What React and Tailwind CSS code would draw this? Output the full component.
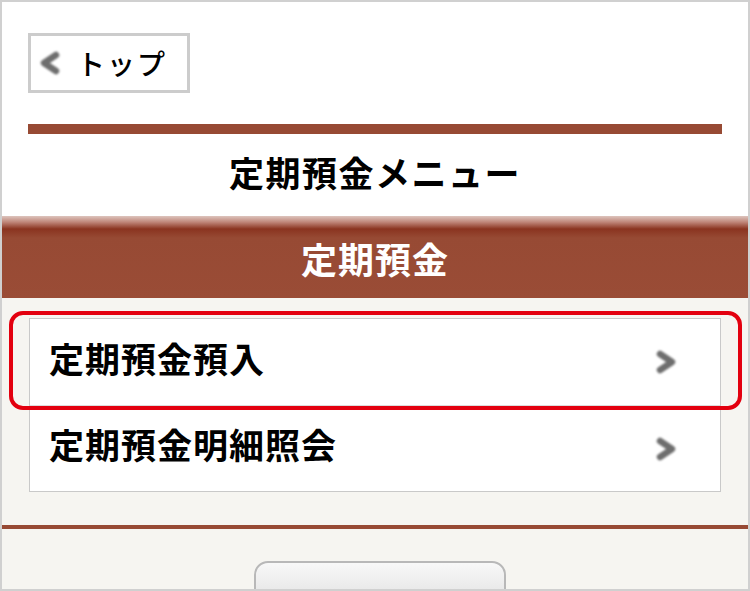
import React from 'react';

function Chevron({ left = false }) {
  return (
    <svg
      width="26"
      height="26"
      viewBox="0 0 26 26"
      className="blur-[0.8px]"
    >
      <polyline
        points={left ? '19,5 7,13 19,21' : '7,5 19,13 7,21'}
        fill="none"
        stroke="#6e6e6e"
        strokeWidth="6.5"
        strokeLinecap="round"
        strokeLinejoin="round"
      />
    </svg>
  );
}

const menuItems = ['定期預金預入', '定期預金明細照会'];

export default function App() {
  return (
    <div
      className="relative w-[750px] h-[591px] overflow-hidden border-2 border-[#d0d0d0] bg-white"
      style={{ fontFamily: '"Noto Sans CJK JP", "Noto Sans", sans-serif' }}
    >
      {/* Top area */}
      <div className="pl-[26px] pr-[26px] pt-[31px]">
        <button className="flex items-center w-[162px] h-[60px] border-[3px] border-[#cccccc] bg-white pl-[6px]">
          <Chevron left />
          <span className="ml-[14px] text-[28px] text-black font-medium tracking-[2px]">
            トップ
          </span>
        </button>
        <div className="mt-[31px] h-[10px] bg-[#974a34]" />
      </div>

      <h1 className="h-[82px] flex items-center justify-center text-[35px] font-bold text-black leading-none tracking-[1.5px] pb-[8px]">
        定期預金メニュー
      </h1>

      {/* Section header */}
      <div className="h-[82px] bg-[linear-gradient(to_bottom,#ddc4bd_0px,#c0877a_6px,#8a3420_13px,#974a34_22px,#9a4c36_100%)] flex items-center justify-center pt-[2px]">
        <span className="text-[36px] font-bold text-white leading-none tracking-[1px]">
          定期預金
        </span>
      </div>

      {/* Body */}
      <div className="bg-[#f6f5f1] h-[300px] pt-[20px]">
        <ul className="ml-[27px] w-[692px] border border-[#c9c9c9] bg-white">
          {menuItems.map((label, i) => (
            <li
              key={label}
              className={
                'h-[86px] flex items-center justify-between pl-[19px] pr-[41px] ' +
                (i > 0 ? 'border-t border-[#dcdcdc]' : '')
              }
            >
              <span className="text-[35px] font-bold text-black leading-none tracking-[1px] pb-[10px]">
                {label}
              </span>
              <Chevron />
            </li>
          ))}
        </ul>

        <div className="mt-[33px] h-[4px] bg-[#974a34]" />

        <div className="mt-[32px] ml-[252px] w-[252px] h-[40px] rounded-t-[14px] border-2 border-[#b8b8b8] bg-[linear-gradient(to_bottom,#f8f8f8,#e4e4e4)]" />
      </div>

      {/* Highlight frame */}
      <div className="absolute left-[7px] top-[309px] w-[733px] h-[99px] border-4 border-[#e3000f] rounded-[14px] pointer-events-none" />
    </div>
  );
}
